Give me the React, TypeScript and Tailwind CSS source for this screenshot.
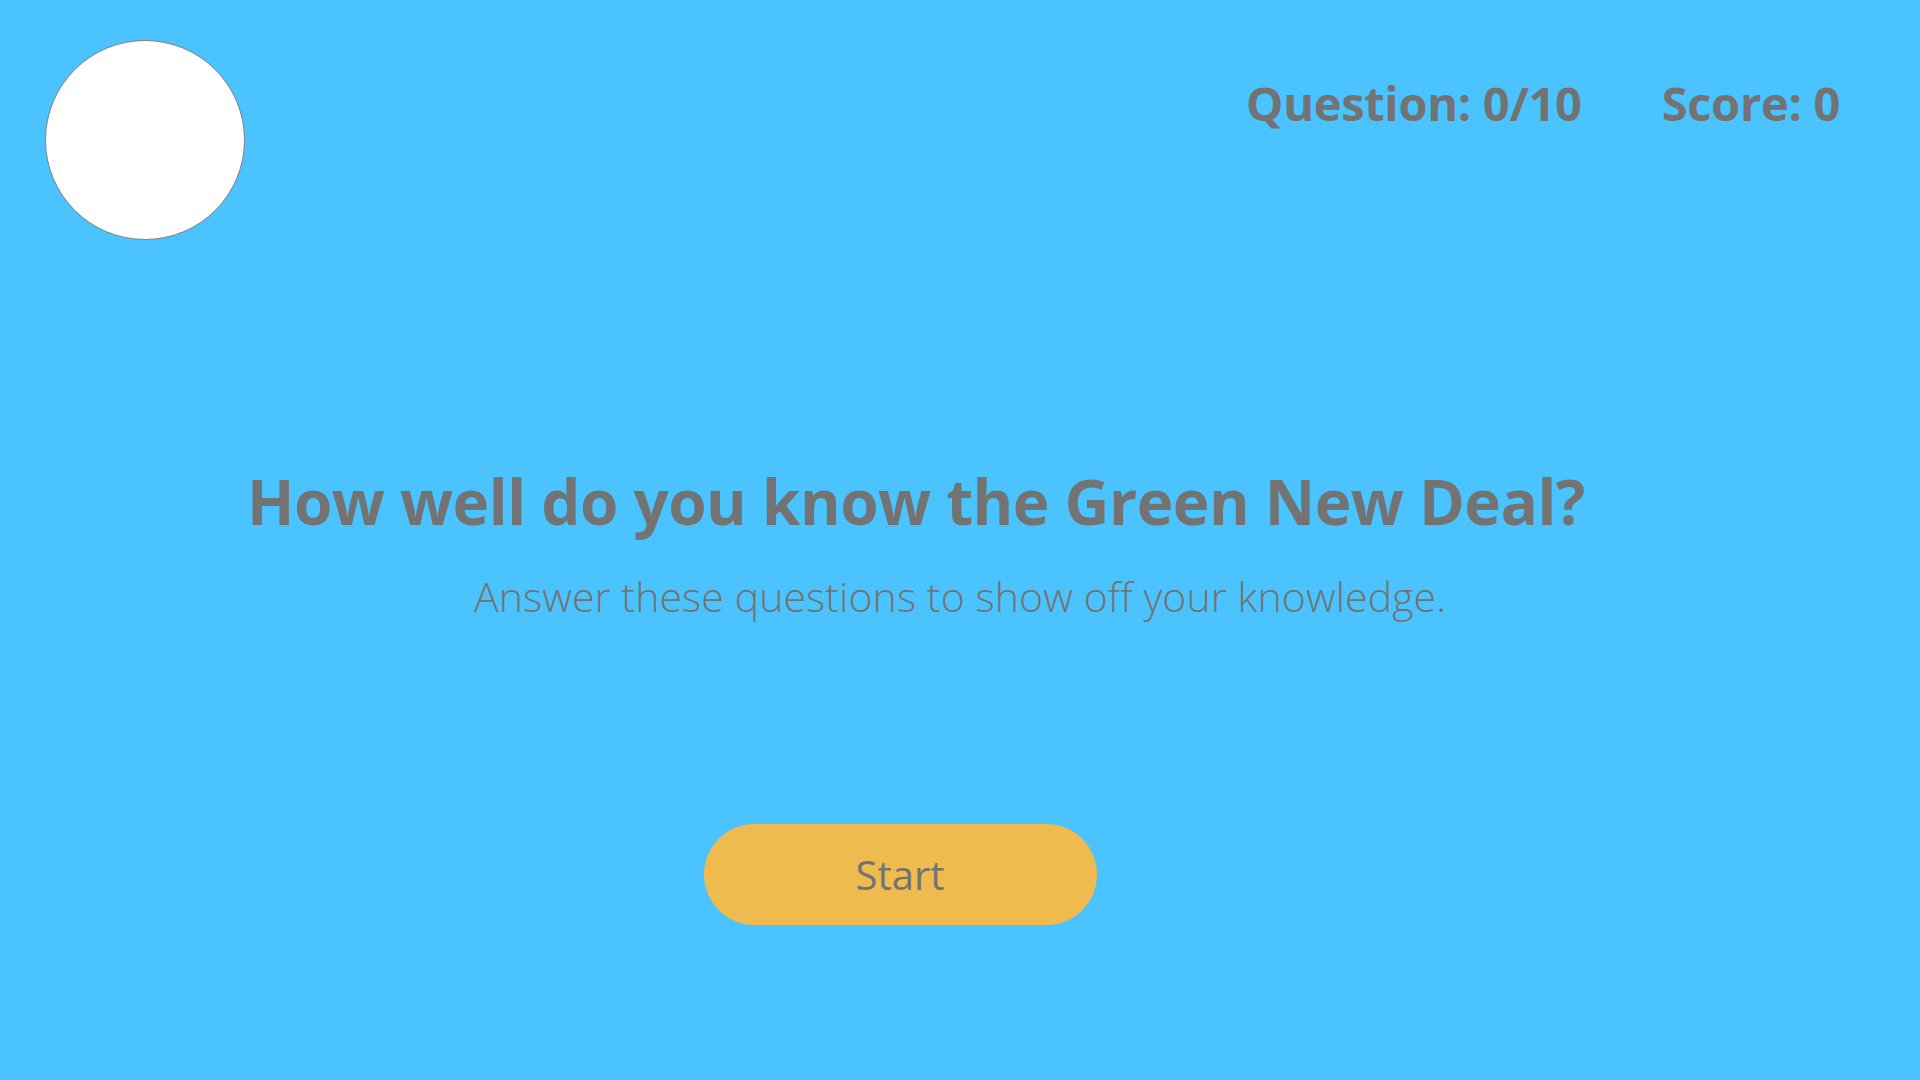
export default function App() {
  return (
    <div className="w-full h-[1080px] bg-[#4bc3ff] flex flex-col [font-family:'Open_Sans','Noto_Sans',sans-serif] text-[#737373] overflow-hidden">
      <div className="flex items-start justify-between pl-[45px] pr-[80px] pt-[40px]">
        <div className="w-[200px] h-[200px] rounded-full bg-white border border-[#808080]" />
        <div className="flex gap-[80px] mt-[40px] text-[47px] font-bold leading-none tracking-[-0.3px]">
          <span>Question: 0/10</span>
          <span>Score: 0</span>
        </div>
      </div>

      <div className="flex flex-col items-center">
        <h1 className="mt-[230px] pr-[88px] text-[62px] font-bold leading-none tracking-[-0.5px]">
          How well do you know the Green New Deal?
        </h1>
        <p className="mt-[44px] text-[41px] font-[350] leading-none tracking-[0.1px]">
          Answer these questions to show off your knowledge.
        </p>
        <button className="mt-[207px] mr-[120px] w-[393px] h-[101px] rounded-full bg-[#f0bb4e] text-[40px] font-normal leading-none text-[#737373]">
          Start
        </button>
      </div>
    </div>
  );
}
